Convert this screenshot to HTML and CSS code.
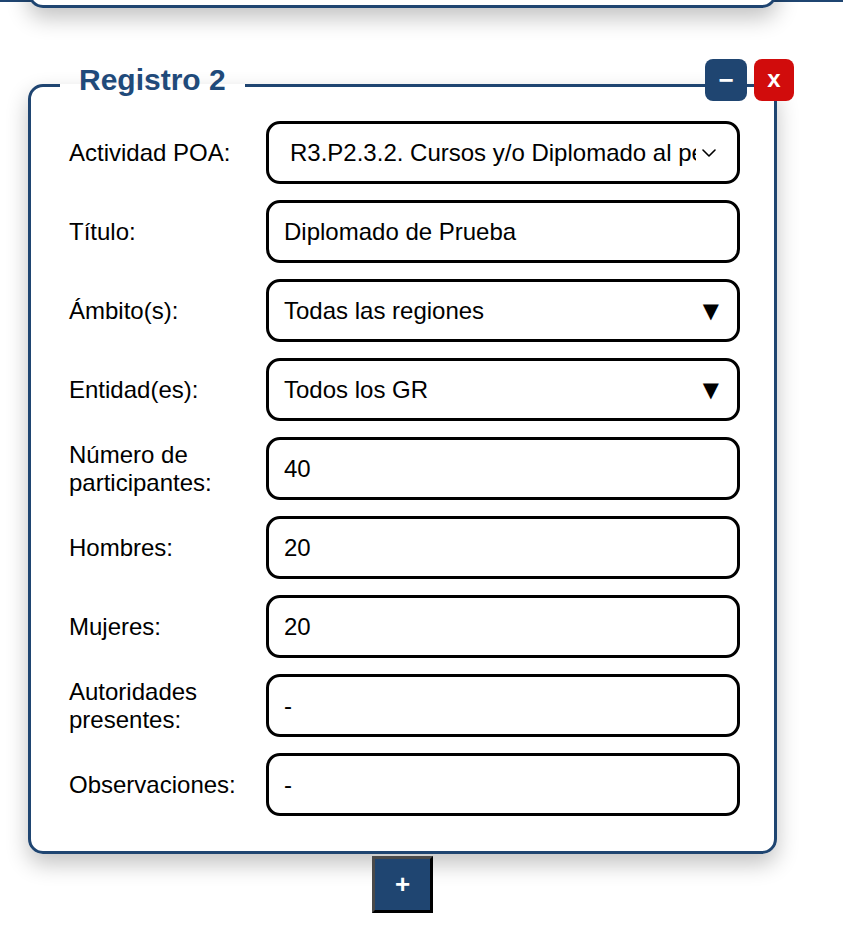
FILE: index.html
```html
<!DOCTYPE html>
<html lang="es">
<head>
<meta charset="utf-8">
<title>Registro 2</title>
<link rel="stylesheet" href="styles.css">
</head>
<body>
<div class="page">
  <div class="prev-card"></div>

  <div class="record">
    <fieldset class="record-box">
      <legend class="record-title">Registro 2</legend>
      <div class="form-grid">
        <label class="field-label">Actividad POA:</label>
        <div class="field-input field-select-wrap">
          <select class="select-native">
            <option>R3.P2.3.2. Cursos y/o Diplomado al personal de los GR</option>
          </select>
          <svg class="select-chevron" width="14" height="8" viewBox="0 0 14 8" aria-hidden="true">
            <path d="M1 1 L7 7 L13 1" fill="none" stroke="#000" stroke-width="1.6" stroke-linecap="round" stroke-linejoin="round"/>
          </svg>
        </div>

        <label class="field-label">Título:</label>
        <div class="field-input">Diplomado de Prueba</div>

        <label class="field-label">Ámbito(s):</label>
        <div class="field-input field-drop"><span>Todas las regiones</span><span class="drop-arrow">▼</span></div>

        <label class="field-label">Entidad(es):</label>
        <div class="field-input field-drop"><span>Todos los GR</span><span class="drop-arrow">▼</span></div>

        <label class="field-label">Número de participantes:</label>
        <div class="field-input">40</div>

        <label class="field-label">Hombres:</label>
        <div class="field-input">20</div>

        <label class="field-label">Mujeres:</label>
        <div class="field-input">20</div>

        <label class="field-label">Autoridades presentes:</label>
        <div class="field-input">-</div>

        <label class="field-label">Observaciones:</label>
        <div class="field-input">-</div>
      </div>
    </fieldset>
    <div class="record-actions">
      <button class="btn-min" type="button">−</button>
      <button class="btn-close" type="button">x</button>
    </div>
    <button class="btn-add" type="button">+</button>
  </div>
</div>
</body>
</html>
```
FILE: styles.css
```css
* { box-sizing: border-box; }

html, body {
  margin: 0;
  padding: 0;
  background: #fff;
  font-family: "Liberation Sans", Arial, sans-serif;
  color: #000;
}

.page {
  border-top: 2px solid #1f4571;
  padding-bottom: 40px;
}

.prev-card {
  position: relative;
  height: 208px;
  margin: -202px 66px 0 28px;
  border: 3px solid #1f4571;
  border-radius: 15px;
  background: #fff;
  box-shadow: 0 10px 22px rgba(0, 0, 0, 0.24);
}

.record {
  position: relative;
  margin: 55px 66px 0 28px;
  display: flex;
  flex-direction: column;
  align-items: center;
}

.record-box {
  align-self: stretch;
  margin: 0;
  padding: 14px 34px 35px 38px;
  border: 3px solid #1f4571;
  border-radius: 15px;
  background: #fff;
  box-shadow: 0 10px 22px rgba(0, 0, 0, 0.24);
}

.record-title {
  margin-left: -9px;
  padding: 0 19px 10px;
  font-size: 30px;
  font-weight: bold;
  color: #1f4a7a;
}

.form-grid {
  display: grid;
  grid-template-columns: 197px 1fr;
  row-gap: 16px;
  align-items: center;
}

.field-label {
  font-size: 24px;
  line-height: 1.15;
  padding-right: 20px;
}

.field-input {
  height: 63px;
  border: 3px solid #000;
  border-radius: 14px;
  padding: 0 15px;
  font-family: "Liberation Sans", Arial, sans-serif;
  font-size: 24px;
  color: #000;
  background: #fff;
  display: flex;
  align-items: center;
  white-space: nowrap;
  overflow: hidden;
}

.field-select-wrap {
  padding: 0 21px 0 21px;
  gap: 6px;
}

.select-native {
  flex: 1;
  min-width: 0;
  appearance: none;
  -webkit-appearance: none;
  border: none;
  outline: none;
  background: transparent;
  padding: 0;
  margin: 0;
  font-family: "Liberation Sans", Arial, sans-serif;
  font-size: 24px;
  color: #000;
}

.select-chevron {
  flex: none;
}

.field-drop {
  justify-content: space-between;
  padding-right: 18px;
}

.drop-arrow {
  font-family: "DejaVu Sans", sans-serif;
  font-size: 21px;
}

.record-actions {
  position: absolute;
  top: -4px;
  right: -17px;
  display: flex;
  gap: 7px;
}

.btn-min,
.btn-close {
  height: 42px;
  border: none;
  border-radius: 8px;
  color: #fff;
  font-family: "Liberation Sans", Arial, sans-serif;
  font-weight: bold;
  padding: 0;
  display: flex;
  align-items: center;
  justify-content: center;
}

.btn-min {
  width: 42px;
  background: #1f4571;
  font-size: 26px;
}

.btn-close {
  width: 40px;
  background: #d10c0c;
  font-size: 24px;
  padding-bottom: 2px;
}

.btn-add {
  display: block;
  margin-top: 2px;
  width: 61px;
  height: 57px;
  background: #1f4571;
  color: #fff;
  border-style: solid;
  border-width: 3px;
  border-color: #4a4a4a #000 #000 #4a4a4a;
  font-family: "Liberation Sans", Arial, sans-serif;
  font-size: 26px;
  font-weight: bold;
  padding: 0;
}
```
